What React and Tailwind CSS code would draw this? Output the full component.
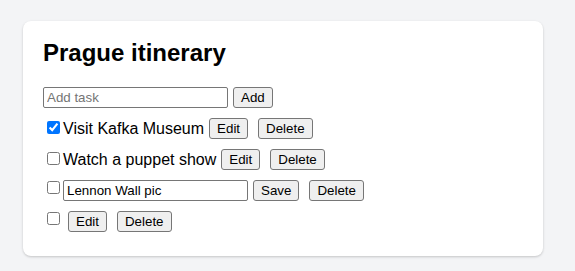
import React from "react";

const btn =
  "h-[21px] px-[7px] border border-[#767676] rounded-[3px] bg-[#efefef] text-[13.33px] leading-none text-black flex items-center";

function Check({ checked, className = "" }) {
  return (
    <input
      type="checkbox"
      defaultChecked={checked}
      className={"w-[13px] h-[13px] m-0 ml-[4px] mr-[3px] accent-[#0075ff] " + className}
    />
  );
}

export default function App() {
  return (
    <div
      className="min-h-[271px] w-[575px] bg-[#f3f4f6] pt-[21px] pl-[23px]"
      style={{ fontFamily: '"Liberation Sans", Arial, sans-serif' }}
    >
      <div className="w-[520px] h-[235px] bg-white rounded-lg shadow-[0_1px_3px_rgba(0,0,0,0.12),0_1px_2px_rgba(0,0,0,0.08)] px-5 pt-5">
        <h2 className="text-[24px] leading-[24px] font-bold text-black">Prague itinerary</h2>
        <div className="mt-[22px] flex flex-col gap-[10px]">
          <div className="flex items-center h-[21px]">
            <input
              type="text"
              placeholder="Add task"
              className="w-[185px] h-[21px] border border-[#767676] rounded-[2px] px-[3px] text-[13.33px] text-black placeholder:text-[#757575] outline-none"
            />
            <button className={btn + " ml-[5px]"}>Add</button>
          </div>

          <div className="flex items-start h-[21px]">
            <Check checked className="mt-[3px]" />
            <span className="text-[16px] leading-[21px] text-black">Visit Kafka Museum</span>
            <button className={btn + " ml-[5px]"}>Edit</button>
            <button className={btn + " ml-[10px]"}>Delete</button>
          </div>

          <div className="flex items-start h-[21px]">
            <Check className="mt-[3px]" />
            <span className="text-[16px] leading-[21px] text-black">Watch a puppet show</span>
            <button className={btn + " ml-[5px]"}>Edit</button>
            <button className={btn + " ml-[10px]"}>Delete</button>
          </div>

          <div className="flex items-start h-[21px]">
            <Check className="mt-[1px]" />
            <input
              type="text"
              defaultValue="Lennon Wall pic"
              className="w-[185px] h-[21px] border border-[#767676] rounded-[2px] px-[3px] text-[13.33px] text-black outline-none"
            />
            <button className={btn + " ml-[5px]"}>Save</button>
            <button className={btn + " ml-[10px]"}>Delete</button>
          </div>

          <div className="flex items-start h-[21px]">
            <Check className="mt-[1px]" />
            <button className={btn + " ml-[5px]"}>Edit</button>
            <button className={btn + " ml-[10px]"}>Delete</button>
          </div>
        </div>
      </div>
    </div>
  );
}
